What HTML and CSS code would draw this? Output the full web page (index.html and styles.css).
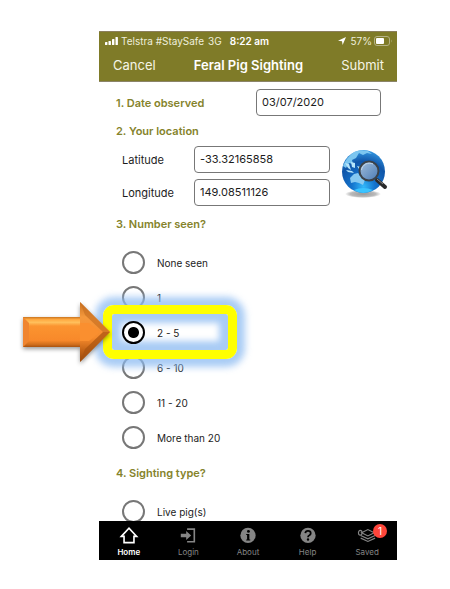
FILE: index.html
```html
<!DOCTYPE html>
<html lang="en">
<head>
    <meta charset="UTF-8">
    <meta name="viewport" content="width=device-width, initial-scale=1.0">
    <title>Feral Pig Sighting</title>
    <link rel="stylesheet" href="styles.css">
</head>
<body>
    <div class="phone">
        <header class="header">
            <div class="status">
                <svg class="signal" viewBox="0 0 13 8" width="13" height="8" fill="#fff">
                    <rect x="0" y="5" width="2.4" height="3" rx=".6"/>
                    <rect x="3.5" y="4" width="2.4" height="4" rx=".6"/>
                    <rect x="7" y="2" width="2.4" height="6" rx=".6"/>
                    <rect x="10.5" y="0" width="2.4" height="8" rx=".6"/>
                </svg>
                <span>Telstra #StaySafe</span>
                <span class="network">3G</span>
                <span class="clock">8:22 am</span>
                <svg class="locate" viewBox="0 0 8 8" width="8" height="8"><path d="M8 0L4.6 8L4 4.2L0 3.7Z" fill="#fff"/></svg>
                <span>57%</span>
                <svg viewBox="0 0 18 10" width="18" height="10">
                    <rect x=".5" y=".5" width="15" height="9" rx="2.5" fill="none" stroke="#b5b284"/>
                    <rect x="2" y="2" width="8" height="6" rx="1" fill="#fff"/>
                    <path d="M17 3.5Q18.2 5 17 6.5Z" fill="#b5b284"/>
                </svg>
            </div>
            <div class="navbar">
                <button type="button">Cancel</button>
                <h1>Feral Pig Sighting</h1>
                <button type="button">Submit</button>
            </div>
        </header>

        <main class="form">
            <div class="date-row">
                <label class="question" for="date">1. Date observed</label>
                <input class="field" type="text" id="date" value="03/07/2020">
            </div>

            <h2 class="question">2. Your location</h2>
            <div class="location">
                <div class="coords">
                    <div class="coord">
                        <label for="lat">Latitude</label>
                        <input class="field" type="text" id="lat" value="-33.32165858">
                    </div>
                    <div class="coord">
                        <label for="lng">Longitude</label>
                        <input class="field" type="text" id="lng" value="149.08511126">
                    </div>
                </div>
                <button class="globe" type="button" aria-label="Find on map">
                    <svg viewBox="0 0 47 50" width="47" height="50">
                        <defs>
                            <radialGradient id="sea" cx=".5" cy=".85" r=".9">
                                <stop offset="0" stop-color="#32b8fa"/>
                                <stop offset=".3" stop-color="#1473cc"/>
                                <stop offset=".65" stop-color="#1055a8"/>
                                <stop offset="1" stop-color="#3aa4ec"/>
                            </radialGradient>
                            <linearGradient id="lens" x1="0" y1="0" x2="1" y2="1">
                                <stop offset="0" stop-color="#a3bfdc"/>
                                <stop offset="1" stop-color="#4a7bb5"/>
                            </linearGradient>
                            <radialGradient id="ground">
                                <stop offset="0" stop-color="#999"/>
                                <stop offset=".7" stop-color="#bbb"/>
                                <stop offset="1" stop-color="#fff"/>
                            </radialGradient>
                        </defs>
                        <ellipse cx="22" cy="45" rx="18" ry="4" fill="url(#ground)"/>
                        <circle cx="22.5" cy="22.5" r="21.5" fill="url(#sea)"/>
                        <path d="M13 3Q19 0 27 2L31 5L26 4L22 6L18 4L15 9L11 11L12 15L8 14L5 19L2 17Q5 9 13 3Z" fill="#7cc6f0"/>
                        <path d="M4 14L8 15L10 21L7 19ZM10 13L14 14L14 19L11 18ZM16 17L20 18L22 21L18 20ZM5 21L11 22L13 24L7 23Z" fill="#b6e5fb"/>
                        <path d="M9 29L13 25L17 24L19 27L21 24L24 31L22 36L18 34L14 33L10 34Z" fill="#86c9f2"/>
                        <path d="M13 41Q22 37 32 41Q22 47 13 41Z" fill="#3bc4ff"/>
                        <path d="M36 31L44 38" stroke="#2a2a2a" stroke-width="4" stroke-linecap="round"/>
                        <path d="M36 30L42 35" stroke="#888" stroke-width="1"/>
                        <circle cx="28" cy="22" r="9.5" fill="url(#lens)" stroke="#3c4248" stroke-width="2"/>
                        <path d="M20.5 21A8 8 0 0 1 32 15" fill="none" stroke="#c4d8eb" stroke-width="1"/>
                    </svg>
                </button>
            </div>

            <h2 class="question number-heading">3. Number seen?</h2>
            <div class="options">
                <label class="option"><input type="radio" name="number">None seen</label>
                <label class="option"><input type="radio" name="number">1</label>
                <div class="selected">
                    <label class="option"><input type="radio" name="number" checked>2 - 5</label>
                    <div class="highlight"></div>
                    <svg class="arrow" viewBox="0 0 88 62" width="88" height="62">
                        <defs>
                            <linearGradient id="shaft" x1="0" y1="16" x2="0" y2="46" gradientUnits="userSpaceOnUse">
                                <stop offset="0" stop-color="#c9741f"/>
                                <stop offset=".08" stop-color="#ffa83f"/>
                                <stop offset=".18" stop-color="#ffc05c"/>
                                <stop offset=".3" stop-color="#fb9430"/>
                                <stop offset=".78" stop-color="#f8892a"/>
                                <stop offset=".92" stop-color="#cf6d1c"/>
                                <stop offset="1" stop-color="#a8520f"/>
                            </linearGradient>
                            <linearGradient id="head" x1="0" y1="1" x2="0" y2="61" gradientUnits="userSpaceOnUse">
                                <stop offset="0" stop-color="#c9711f"/>
                                <stop offset=".25" stop-color="#f5993d"/>
                                <stop offset=".6" stop-color="#f68a2c"/>
                                <stop offset=".8" stop-color="#c46417"/>
                                <stop offset="1" stop-color="#96470b"/>
                            </linearGradient>
                        </defs>
                        <path d="M0 16H58V46H0Z" fill="url(#shaft)"/>
                        <path d="M57 1L87 31L57 61Z" fill="url(#head)"/>
                        <path d="M0 16L6 22V40L0 46Z" fill="#f08530"/>
                        <path d="M57 22H66L77 31L66 40H57Z" fill="#fa8f2f"/>
                        <path d="M57 1L87 31H80L62 14Z" fill="#c97022" opacity=".7"/>
                        <path d="M57 61L87 31H80L62 48Z" fill="#a8520f" opacity=".7"/>
                    </svg>
                </div>
                <label class="option"><input type="radio" name="number">6 - 10</label>
                <label class="option"><input type="radio" name="number">11 - 20</label>
                <label class="option"><input type="radio" name="number">More than 20</label>
            </div>

            <h2 class="question number-heading">4. Sighting type?</h2>
            <div class="options">
                <label class="option"><input type="radio" name="type">Live pig(s)</label>
            </div>
        </main>

        <nav class="tabs">
            <a class="tab active" href="#">
                <svg viewBox="0 0 20 20" width="20" height="20" fill="none" stroke="#fff" stroke-width="1.8"><path d="M1.500 11.500L10 2.500L18.500 11.500H15.500V18.500H4.500V11.500Z"/></svg>
                Home
            </a>
            <a class="tab" href="#">
                <svg viewBox="0 0 20 20" width="20" height="20"><path d="M9 3.5H17V17.5H9" fill="none" stroke="#858585" stroke-width="1.8"/><path d="M2 8.5H8V5.5L13.5 10.5L8 15.5V12.5H2Z" fill="#858585"/></svg>
                Login
            </a>
            <a class="tab" href="#">
                <svg viewBox="0 0 20 20" width="20" height="20"><circle cx="10" cy="10.5" r="8.5" fill="#858585"/><circle cx="10.5" cy="6" r="1.6" fill="#000"/><path d="M8 9H11.5V15H12.5V16H8V15H9V10H8Z" fill="#000"/></svg>
                About
            </a>
            <a class="tab" href="#">
                <svg viewBox="0 0 20 20" width="20" height="20"><circle cx="10" cy="10.5" r="8.5" fill="#858585"/><path d="M7 8Q7.3 5.5 10 5.5Q13 5.5 13 8Q13 9.5 11.5 10.3Q10 11 10 12.5" fill="none" stroke="#000" stroke-width="2"/><circle cx="10" cy="15" r="1.3" fill="#000"/></svg>
                Help
            </a>
            <a class="tab" href="#">
                <svg viewBox="0 0 20 20" width="20" height="20" fill="none" stroke="#858585" stroke-width="1.3"><ellipse cx="2.5" cy="7.5" rx="2" ry="2.700"/><path d="M4 7.5L11 4L18 7.5L11 11ZM3 10.5L11 14.2L19 10.5M3 13.5L11 17.2L19 13.5"/></svg>
                Saved
                <span class="badge">1</span>
            </a>
        </nav>
    </div>
</body>
</html>
```
FILE: styles.css
```css
* {
    box-sizing: border-box;
}

body {
    margin: 0;
    background: #fff;
    color: #1c1c1c;
    font-family: Inter, "Liberation Sans", sans-serif;
    font-size: 11px;
}

.phone {
    margin: 31px 53px 29px 99px;
}

.header {
    background: #7f7b28;
    border-top: 1px solid #8b7f5c;
    border-bottom: 1px solid #8b8468;
    color: #fff;
}

.status {
    display: flex;
    align-items: center;
    height: 17px;
    padding: 0 5px 0 6px;
    font-size: 10px;
}

.status span {
    color: #eeeedc;
}

.signal {
    margin-right: 3px;
}

.network {
    margin-left: 4px;
}

.status .clock {
    margin-left: 8px;
    color: #fff;
    font-weight: 600;
}

.locate {
    margin-left: auto;
    margin-right: 4px;
}

.status span + svg:last-child {
    margin-left: 2px;
}

.navbar {
    display: flex;
    align-items: center;
    justify-content: space-between;
    height: 32px;
    padding: 0 13px 0 14px;
}

.navbar h1 {
    margin: 0;
    font-size: 13px;
    font-weight: 600;
}

.navbar button {
    padding: 0;
    border: none;
    background: none;
    color: #f5f5e6;
    font-family: inherit;
    font-size: 13px;
    cursor: pointer;
}

.form {
    padding: 7px 9px 0 17px;
    margin-bottom: -8px;
}

.question {
    margin: 5px 0;
    color: #85832b;
    font-size: 11px;
    font-weight: 600;
    line-height: 20px;
}

.number-heading {
    margin: 8px 0 11px;
}

.date-row {
    display: flex;
    align-items: center;
    justify-content: space-between;
    padding-right: 7px;
}

.date-row .question {
    margin: 0;
}

.date-row .field {
    width: 125px;
}

.field {
    height: 27px;
    min-width: 0;
    padding: 0 5px 1px;
    border: 1px solid #777;
    border-radius: 4px;
    background: #fff;
    color: #1c1c1c;
    font-family: inherit;
    font-size: 11px;
}

.location {
    display: flex;
    align-items: center;
    gap: 11px;
    padding-left: 6px;
}

.coords {
    display: flex;
    flex: 1;
    flex-direction: column;
    gap: 6px;
    min-width: 0;
}

.coord {
    display: flex;
    align-items: center;
}

.coord label {
    width: 72px;
    flex-shrink: 0;
}

.coord .field {
    flex: 1;
}

.globe {
    display: flex;
    padding: 0 0 4px;
    border: none;
    background: none;
    cursor: pointer;
}

.options {
    padding-left: 6px;
}

.option {
    display: flex;
    align-items: center;
    gap: 12px;
    height: 35px;
    font-size: 10px;
}

.option input {
    appearance: none;
    width: 23px;
    height: 23px;
    margin: 0;
    border: 2px solid #777;
    border-radius: 50%;
    background: #fff;
}

.option input:checked {
    border-color: #000;
    background: radial-gradient(circle, #000 5px, #fff 6px);
}

.selected {
    position: relative;
}

.selected .option {
    position: relative;
    z-index: 2;
}

/* yellow frame with a blue glow on both sides */
.highlight {
    position: absolute;
    z-index: 1;
    top: -10px;
    left: -19px;
    width: 134px;
    height: 54px;
    border: 9px solid #ff0;
    border-radius: 11px;
    box-shadow: 0 0 7px 8px rgba(140, 187, 242, 0.75), inset 0 0 6px 9px rgba(140, 187, 242, 0.75);
    pointer-events: none;
}

.arrow {
    position: absolute;
    z-index: 3;
    top: -14px;
    left: -99px;
    overflow: visible;
    filter: drop-shadow(0 2px 2px rgba(0, 0, 0, 0.4));
    pointer-events: none;
}

.tabs {
    position: relative;
    z-index: 1;
    display: flex;
    height: 39px;
    background: #000;
}

.tab {
    position: relative;
    display: flex;
    flex: 1;
    flex-direction: column;
    align-items: center;
    padding-top: 5px;
    color: #858585;
    font-size: 8px;
    line-height: 16px;
    text-decoration: none;
}

.tab.active {
    color: #fff;
    font-weight: 600;
}

.badge {
    position: absolute;
    top: 3px;
    right: 10px;
    width: 14px;
    height: 14px;
    border-radius: 50%;
    background: #ff453a;
    color: #fff;
    font-size: 10px;
    line-height: 14px;
    text-align: center;
}
```
